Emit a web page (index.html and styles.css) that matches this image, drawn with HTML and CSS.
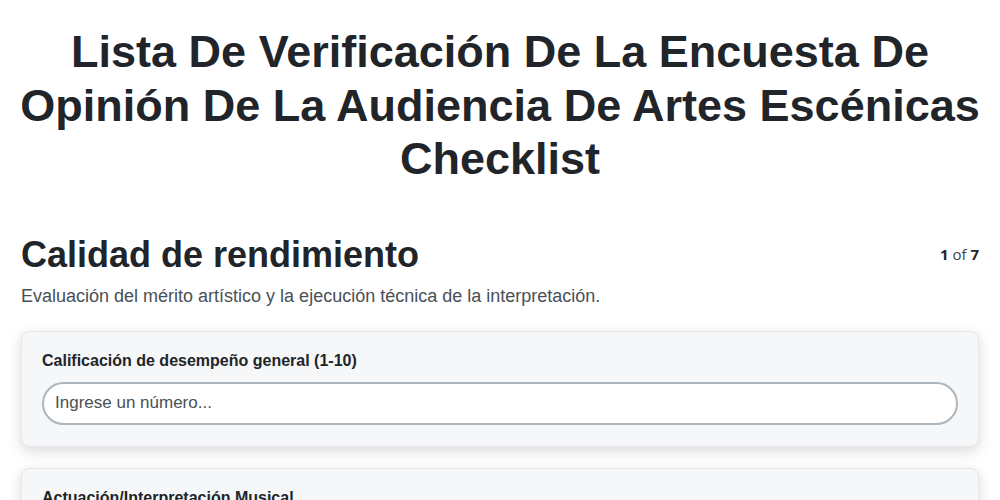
FILE: index.html
```html
<!DOCTYPE html>
<html lang="es">
<head>
    <meta charset="UTF-8">
    <meta name="viewport" content="width=device-width, initial-scale=1.0">
    <title>Lista De Verificación</title>
    <link rel="stylesheet" href="styles.css">
</head>
<body>
    <div class="header">
        <h1 class="page-title">Lista De Verificación De La Encuesta De Opinión De La Audiencia De Artes Escénicas Checklist</h1>
    </div>

    <div class="container">
        <div class="section">
            <div class="section-header">
                <h2>Calidad de rendimiento</h2>
                <div class="step"><b>1</b> of <b>7</b></div>
            </div>
            <p class="section-desc">Evaluación del mérito artístico y la ejecución técnica de la interpretación.</p>

            <div class="question-card">
                <label for="q1">Calificación de desempeño general (1-10)</label>
                <input type="text" id="q1" placeholder="Ingrese un número...">
            </div>

            <div class="question-card">
                <label for="q2">Actuación/Interpretación Musical</label>
                <input type="text" id="q2" placeholder="Ingrese un número...">
            </div>
        </div>
    </div>
</body>
</html>
```

FILE: styles.css
```css
* {
    margin: 0;
    padding: 0;
    box-sizing: border-box;
}

body {
    background-color: #fff;
    color: #212529;
    font-family: "Liberation Sans", Arial, sans-serif;
    line-height: 1.5;
}

.header {
    padding: 25px 10px 0;
}

.container {
    padding: 47px 21px 20px;
}

.page-title {
    text-align: center;
    font-size: 45px;
    line-height: 53.5px;
    font-weight: bold;
    color: #212529;
}

.section-header {
    display: flex;
    justify-content: space-between;
    align-items: center;
}

.section-header h2 {
    font-size: 36px;
    line-height: 43px;
    font-weight: bold;
}

.step {
    font-family: "Open Sans", sans-serif;
    font-size: 15px;
    color: #3d434a;
}

.step b {
    color: #212529;
}

.section-desc {
    margin-top: 7px;
    font-size: 18px;
    line-height: 27px;
    color: #495057;
    margin-bottom: 21px;
}

.question-card {
    background-color: #f6f7f9;
    border: 1px solid #e6e7eb;
    border-radius: 8px;
    box-shadow: 0 4px 14px rgba(0, 0, 0, 0.15);
    padding: 17px 20px 21px;
    margin-bottom: 21px;
}

.question-card label {
    display: block;
    font-size: 16px;
    font-weight: bold;
    line-height: 24px;
    margin-bottom: 9px;
}

.question-card input {
    display: block;
    width: 100%;
    height: 43px;
    padding: 0 11px;
    font-family: "Liberation Sans", Arial, sans-serif;
    font-size: 17px;
    color: #212529;
    background-color: #fff;
    border: 2px solid #adb5bd;
    border-radius: 22px;
    outline: none;
}

.question-card input::placeholder {
    color: #4a5056;
}
```
